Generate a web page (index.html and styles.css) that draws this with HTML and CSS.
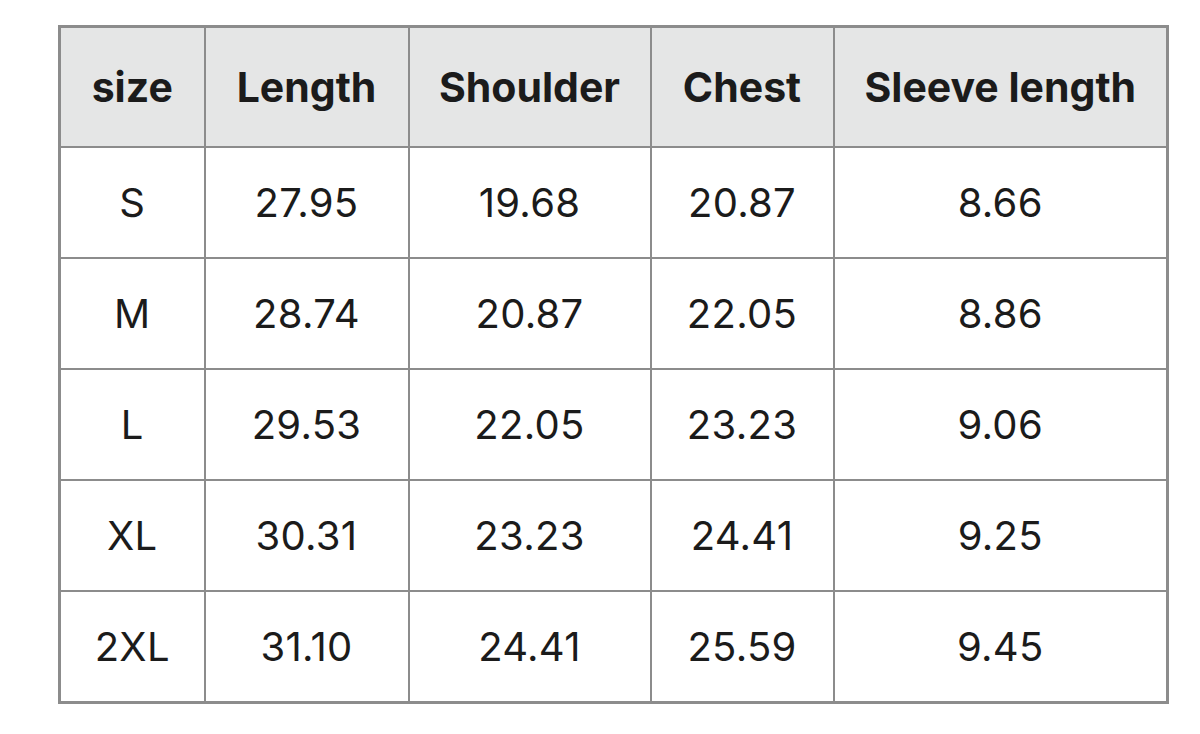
FILE: index.html
```html
<!DOCTYPE html>
<html>
<head>
<meta charset="utf-8">
<link rel="stylesheet" href="styles.css">
</head>
<body>
<table class="size-table">
  <colgroup>
    <col class="c1"><col class="c2"><col class="c3"><col class="c4"><col class="c5">
  </colgroup>
  <thead>
    <tr><th>size</th><th>Length</th><th>Shoulder</th><th>Chest</th><th>Sleeve length</th></tr>
  </thead>
  <tbody>
    <tr><td>S</td><td>27.95</td><td>19.68</td><td>20.87</td><td>8.66</td></tr>
    <tr><td>M</td><td>28.74</td><td>20.87</td><td>22.05</td><td>8.86</td></tr>
    <tr><td>L</td><td>29.53</td><td>22.05</td><td>23.23</td><td>9.06</td></tr>
    <tr><td>XL</td><td>30.31</td><td>23.23</td><td>24.41</td><td>9.25</td></tr>
    <tr><td>2XL</td><td>31.10</td><td>24.41</td><td>25.59</td><td>9.45</td></tr>
  </tbody>
</table>
</body>
</html>
```

FILE: styles.css
```css
html, body {
  margin: 0;
  padding: 0;
  background: #ffffff;
}
body {
  padding: 25px 0 0 58px;
  font-family: Inter, "Liberation Sans", sans-serif;
  color: #1b1b1b;
}
.size-table {
  border-collapse: collapse;
  table-layout: fixed;
  width: 1108px;
  border: 3px solid #8c8c8c;
}
.c1 { width: 145px; }
.c2 { width: 204px; }
.c3 { width: 242px; }
.c4 { width: 183px; }
.c5 { width: 334px; }
.size-table th,
.size-table td {
  border: 2px solid #8c8c8c;
  text-align: center;
  padding: 0;
}
.size-table th {
  height: 118px;
  background: #e5e6e6;
  font-weight: 700;
  font-size: 41px;
  letter-spacing: 0;
}
.size-table td {
  height: 109px;
  font-weight: 400;
  font-size: 40px;
  letter-spacing: 0.3px;
}
```
